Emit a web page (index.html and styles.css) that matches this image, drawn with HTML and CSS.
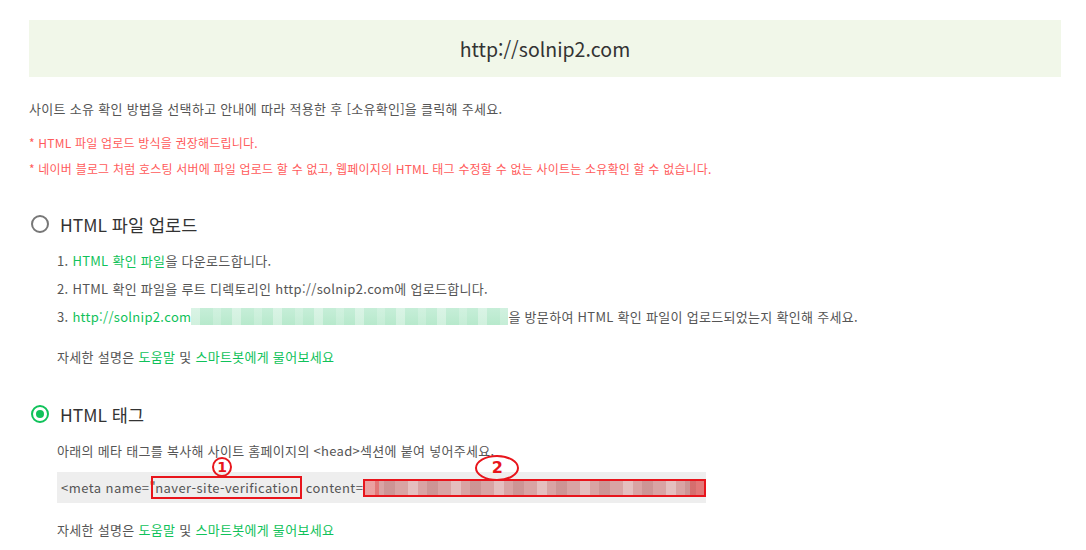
FILE: index.html
```html
<!DOCTYPE html>
<html lang="ko">

<head>
    <meta charset="UTF-8">
    <meta name="viewport" content="width=device-width, initial-scale=1.0">
    <title>사이트 소유확인</title>
    <link rel="stylesheet" href="styles.css">
</head>

<body>
    <div class="page">
        <div class="site-box">http://solnip2.com</div>

        <p class="intro">사이트 소유 확인 방법을 선택하고 안내에 따라 적용한 후 [소유확인]을 클릭해 주세요.</p>
        <ul class="notes">
            <li>* HTML 파일 업로드 방식을 권장해드립니다.</li>
            <li>* 네이버 블로그 처럼 호스팅 서버에 파일 업로드 할 수 없고, 웹페이지의 HTML 태그 수정할 수 없는 사이트는 소유확인 할 수 없습니다.</li>
        </ul>

        <div class="method method-file">
            <label class="method-title"><span class="radio"></span>HTML 파일 업로드</label>
            <ol class="steps">
                <li>1. <a href="#" class="green">HTML 확인 파일</a>을 다운로드합니다.</li>
                <li>2. HTML 확인 파일을 루트 디렉토리인 http://solnip2.com에 업로드합니다.</li>
                <li>3. <a href="#" class="green">http://solnip2.com</a><span class="mosaic mosaic-green"></span>을 방문하여 HTML 확인 파일이 업로드되었는지 확인해 주세요.</li>
            </ol>
            <p class="help">자세한 설명은 <a href="#" class="green">도움말</a> 및 <a href="#" class="green">스마트봇에게 물어보세요</a></p>
        </div>

        <div class="method method-tag">
            <label class="method-title"><span class="radio checked"></span>HTML 태그</label>
            <p class="desc">아래의 메타 태그를 복사해 사이트 홈페이지의 &lt;head&gt;섹션에 붙여 넣어주세요.</p>
            <div class="code">&lt;meta name="<span class="mark mark-name">naver-site-verification<span class="note note-1">1</span></span> content=<span class="mark mosaic mosaic-red"><span class="note note-2">2</span></span></div>
            <p class="help">자세한 설명은 <a href="#" class="green">도움말</a> 및 <a href="#" class="green">스마트봇에게 물어보세요</a></p>
        </div>
    </div>
</body>

</html>
```

FILE: styles.css
```css
/* page basics */
body {
    margin: 0;
    background: #fff;
    color: #555;
    font-family: "Noto Sans CJK KR", "Noto Sans", sans-serif;
    font-size: 13px;
    letter-spacing: 0.3px;
}

.page {
    padding: 20px 25px 0 29px;
}

p,
ul,
ol {
    margin: 0;
    padding: 0;
    list-style: none;
}

a {
    text-decoration: none;
}

.green {
    color: #10c25a;
}

/* site url box */
.site-box {
    height: 57px;
    background-color: #f1f7e9;
    display: flex;
    align-items: center;
    justify-content: center;
    font-size: 19.5px;
    letter-spacing: 0;
    color: #333;
}

.intro {
    margin-top: 22px;
    line-height: 20px;
}

.notes {
    margin-top: 11px;
    font-size: 12px;
    color: #ff5b5b;
    line-height: 26px;
    letter-spacing: 0.2px;
}

/* methods */
.method-title {
    display: flex;
    align-items: center;
    height: 30px;
    font-size: 17.5px;
    letter-spacing: 0;
    color: #333;
    padding-left: 2px;
}

.method-file .method-title {
    margin-top: 27px;
}

.method-tag .method-title {
    margin-top: 32px;
}

.radio {
    width: 14px;
    height: 14px;
    border: 2px solid #777;
    border-radius: 50%;
    margin-right: 11px;
    position: relative;
}

.radio.checked {
    border-color: #10c25a;
}

.radio.checked::after {
    content: "";
    position: absolute;
    left: 3px;
    top: 3px;
    width: 8px;
    height: 8px;
    border-radius: 50%;
    background: #10c25a;
}

.steps {
    margin-top: 8px;
    padding-left: 28px;
    line-height: 28px;
}

.help {
    margin-top: 16px;
    padding-left: 28px;
    line-height: 20px;
}

.desc {
    margin-top: 12px;
    padding-left: 28px;
    line-height: 20px;
}

.code {
    margin: 11px 0 17px 28px;
    width: 645px;
    height: 31px;
    line-height: 31px;
    padding-left: 4px;
    background: #eee;
    white-space: nowrap;
    color: #555;
    letter-spacing: 0.45px;
}

.method-tag .help {
    margin-top: 0;
}

/* blurred parts */
.mosaic {
    display: inline-block;
    vertical-align: middle;
}

.mosaic-green {
    width: 317px;
    height: 17px;
    margin-top: -3px;
    background:
        repeating-linear-gradient(90deg, rgba(255, 255, 255, 0.35) 0 9px, transparent 9px 22px, rgba(255, 255, 255, 0.2) 22px 30px, transparent 30px 41px),
        linear-gradient(#c6eed8, #b7e9cc);
}

.mark {
    position: relative;
    border: 2px solid #e8151c;
}

.mark-name {
    margin-left: -5px;
    padding: 0 1px 0 2px;
    line-height: 14px;
}

.mosaic-red {
    width: 339px;
    height: 14px;
    margin-top: -3px;
    background:
        repeating-linear-gradient(90deg, rgba(255, 255, 255, 0.3) 0 10px, transparent 10px 19px, rgba(120, 40, 40, 0.12) 19px 30px, transparent 30px 43px),
        linear-gradient(90deg, #e27878 0 14px, #d8a4a4 14px calc(100% - 14px), #e27878 calc(100% - 14px));
}

/* red annotations drawn on top */
.note {
    position: absolute;
    border: 2px solid #e8151c;
    border-radius: 50%;
    color: #e8151c;
    font-weight: bold;
    font-family: "DejaVu Sans", sans-serif;
    letter-spacing: 0;
    line-height: 1;
    display: flex;
    align-items: center;
    justify-content: center;
}

.note-1 {
    left: 59px;
    top: -21px;
    width: 16px;
    height: 16px;
    font-size: 14px;
}

.note-2 {
    left: 110px;
    top: -26px;
    width: 40px;
    height: 22px;
    font-size: 16px;
}
```
